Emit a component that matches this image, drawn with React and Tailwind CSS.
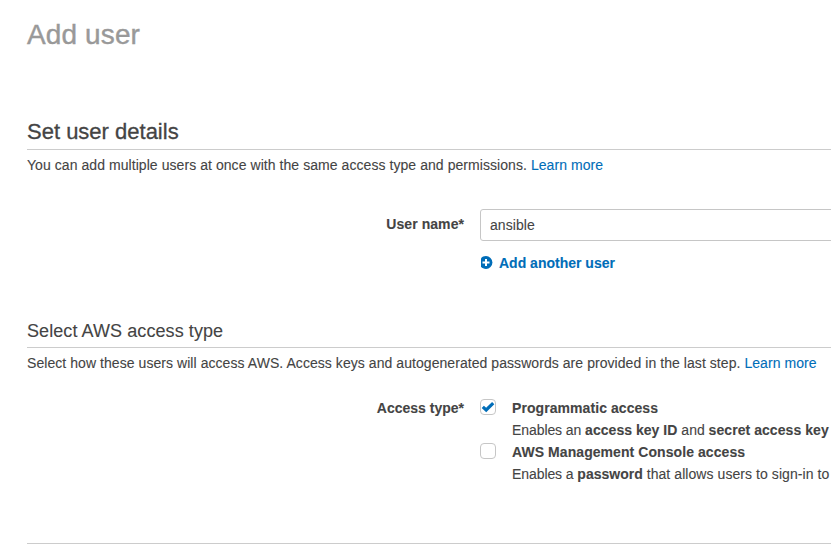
function PlusCircle() {
  return (
    <svg className="mb-[2px] block h-[13px] w-[13px] shrink-0" viewBox="0 0 13 13">
      <path fill="#006db8" d="M1 2.2C2.1.8 3.9.1 6 .1a6.4 6.4 0 0 1 0 12.8C3.9 12.9 2.1 12.2 1 10.8Z" />
      <path stroke="#fff" strokeWidth="2" d="M6 3v7M2.5 6.5h7" />
    </svg>
  );
}

function Checkbox({ checked }) {
  return (
    <span className="block h-4 w-4 shrink-0 rounded border border-[#c6c6c6] bg-white">
      {checked && (
        <svg className="block h-[14px] w-[14px]" viewBox="0 0 14 14" fill="none">
          <path stroke="#006db8" strokeWidth="3.2" d="M1.8 6.8 5.2 10 12.2 3.1" />
        </svg>
      )}
    </span>
  );
}

function Learn() {
  return <a className="text-[#006db8]">Learn more</a>;
}

function Option({ checked, title, children }) {
  return (
    <div className="flex h-11">
      <div className="w-8 shrink-0 pt-[2px]">
        <Checkbox checked={checked} />
      </div>
      <div className="leading-[22px]">
        <div className="font-bold tracking-[0.07px]">{title}</div>
        <div>{children}</div>
      </div>
    </div>
  );
}

export default function App() {
  return (
    <div className="flex h-[544px] w-[831px] flex-col overflow-hidden whitespace-nowrap bg-white pl-[27px] font-['Liberation_Sans',Arial,sans-serif] text-[14px] leading-5 text-[#444] [-webkit-text-stroke:0.1px_currentColor]">
      <h1 className="mt-[19px] h-8 text-[28px] leading-8 tracking-[0.12px] text-[#999] [-webkit-text-stroke:0.4px_currentColor]">Add user</h1>

      <section className="mt-[67px]">
        <h2 className="h-8 border-b border-[#ccc] text-[22px] leading-[27px] [-webkit-text-stroke:0.3px_currentColor]">Set user details</h2>
        <p className="mt-[5px] tracking-[0.062px]">
          You can add multiple users at once with the same access type and permissions. <Learn />
        </p>
        <div className="mt-[34px] flex">
          <div className="w-[437px] shrink-0 pt-[5px] text-right font-bold tracking-[0.06px]">User name*</div>
          <div className="ml-4 w-[500px] shrink-0">
            <div className="h-8 rounded-[3px] border border-[#c6c6c6] pl-[9px] leading-[31px] tracking-[0.06px]">ansible</div>
            <div className="mt-3 flex h-5 items-center font-bold text-[#006db8]">
              <PlusCircle />
              <span className="ml-[6px]">Add another user</span>
            </div>
          </div>
        </div>
      </section>

      <section className="mt-[45px]">
        <h3 className="h-[30px] border-b border-[#ccc] text-[18px] leading-[26px] tracking-[0.08px]">Select AWS access type</h3>
        <p className="mt-[5px] tracking-[0.06px]">
          Select how these users will access AWS. Access keys and autogenerated passwords are provided in the last step. <Learn />
        </p>
        <div className="mt-[24px] flex">
          <div className="w-[437px] shrink-0 text-right font-bold leading-[22px]">Access type*</div>
          <div className="ml-4">
            <Option checked title="Programmatic access">
              <span className="tracking-[-0.08px]">Enables an </span>
              <b className="tracking-[0.04px]">access key ID</b> and <b className="tracking-[0.06px]">secret access key</b>
            </Option>
            <Option title="AWS Management Console access">
              <span className="tracking-[-0.08px]">Enables a </span>
              <b>password</b>
              <span className="tracking-[0.07px]"> that allows users to sign-in to</span>
            </Option>
          </div>
        </div>
      </section>

      <div className="mt-[58px] h-px shrink-0 bg-[#ccc]" />
    </div>
  );
}
